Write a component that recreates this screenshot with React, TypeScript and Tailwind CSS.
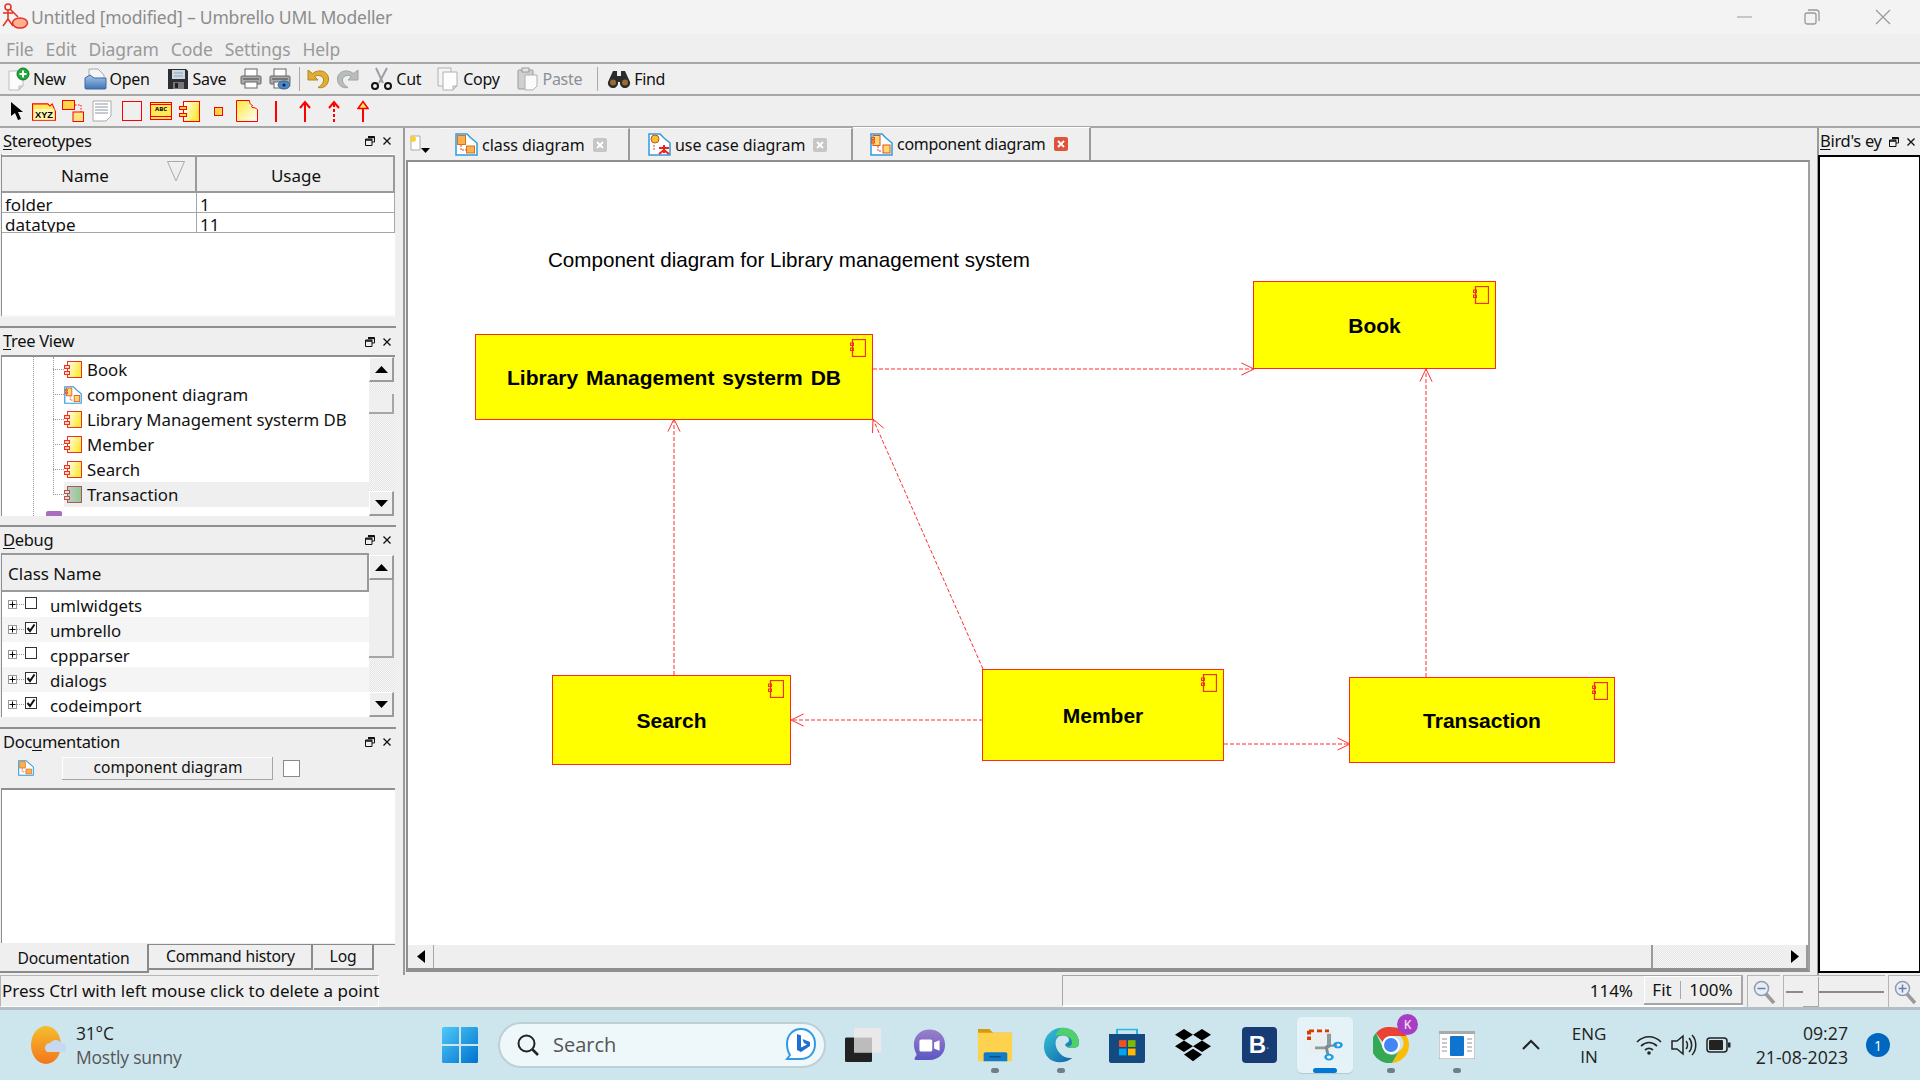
import type { ReactNode } from "react";
import clsx from "clsx";

const UI_FONT = "font-['Noto_Sans','Open_Sans',sans-serif]";

function Gradients() {
  return (
    <svg className="absolute h-0 w-0">
      <defs>
        <linearGradient id="yel" x1="0" y1="0" x2="1" y2="0.4">
          <stop offset="0" stopColor="#fff" />
          <stop offset="1" stopColor="#ffe93a" />
        </linearGradient>
        <linearGradient id="yel2" x1="0" y1="0" x2="1" y2="1">
          <stop offset="0" stopColor="#ffe93a" />
          <stop offset="1" stopColor="#fff" />
        </linearGradient>
        <linearGradient id="sel" x1="0" y1="0" x2="1" y2="0">
          <stop offset="0" stopColor="#c9c9c9" />
          <stop offset="1" stopColor="#8fc98f" />
        </linearGradient>
        <linearGradient id="blue" x1="0" y1="0" x2="0" y2="1">
          <stop offset="0" stopColor="#a9c8ea" />
          <stop offset="1" stopColor="#3e74b5" />
        </linearGradient>
        <linearGradient id="win" x1="0" y1="0" x2="1" y2="1">
          <stop offset="0" stopColor="#4fc8f8" />
          <stop offset="1" stopColor="#0072cf" />
        </linearGradient>
        <linearGradient id="sun" x1="0" y1="0" x2="0" y2="1">
          <stop offset="0" stopColor="#f4bf2d" />
          <stop offset="1" stopColor="#f4761b" />
        </linearGradient>
        <linearGradient id="edge" x1="0" y1="0" x2="1" y2="1">
          <stop offset="0" stopColor="#37c6d8" />
          <stop offset="1" stopColor="#0c59a4" />
        </linearGradient>
        <linearGradient id="chat" x1="0" y1="0" x2="0" y2="1">
          <stop offset="0" stopColor="#9b7fc7" />
          <stop offset="1" stopColor="#5b57c4" />
        </linearGradient>
      </defs>
    </svg>
  );
}

function CompIcon({ selected }: { selected?: boolean }) {
  const stroke = selected ? "#a65a5a" : "#f03020";
  return (
    <svg width="18" height="18" viewBox="0 0 18 18" className="shrink-0">
      <rect x="3.5" y="0.5" width="14" height="16" fill={selected ? "url(#sel)" : "url(#yel)"} stroke={stroke} />
      <rect x="0.5" y="4.5" width="5" height="3" fill="#ffd0c0" stroke={stroke} />
      <rect x="0.5" y="10.5" width="5" height="3" fill="#ffd0c0" stroke={stroke} />
    </svg>
  );
}

function DiagIcon({ kind, size = 23 }: { kind: "class" | "use" | "comp"; size?: number }) {
  return (
    <svg width={size} height={size} viewBox="0 0 23 23" className="shrink-0">
      <path d="M1 1h11l4 4 6 5v12H1z" fill="#fff" stroke="#2f9be0" strokeWidth="1.5" />
      {kind === "class" && (
        <>
          <rect x="2.5" y="2.5" width="8" height="9" fill="#f8b050" stroke="#d87020" />
          <rect x="11.5" y="13" width="8" height="7" fill="#f8b050" stroke="#d87020" />
          <path d="M6 12v5h5" fill="none" stroke="#e04020" strokeDasharray="2 1" />
        </>
      )}
      {kind === "use" && (
        <>
          <circle cx="7" cy="6" r="4" fill="#f5c030" stroke="#c8502a" />
          <path d="M6 12v6" stroke="#e04020" strokeDasharray="2 1" />
          <path d="M16 12v8M11 15h10M16 17l-5 4M16 17l5 4" stroke="#ee2020" strokeWidth="2" />
        </>
      )}
      {kind === "comp" && (
        <>
          <rect x="3" y="2.5" width="7" height="10" fill="#ffd870" stroke="#e05020" />
          <rect x="1.5" y="4.5" width="3" height="2" fill="#f8b050" stroke="#e05020" />
          <rect x="1.5" y="8" width="3" height="2" fill="#f8b050" stroke="#e05020" />
          <rect x="13" y="12" width="7" height="8" fill="#ffd870" stroke="#e05020" />
          <path d="M8 13v5h4" fill="none" stroke="#e04020" strokeDasharray="2 1" />
        </>
      )}
    </svg>
  );
}

function FloatClose() {
  return (
    <div className="ml-auto flex items-center gap-[7px] pr-[4px]">
      <svg width="10" height="10" viewBox="0 0 10 10">
        <path d="M3 .5h6.5V6H7M.5 3H7v6.5H.5z" fill="none" stroke="#111" strokeWidth="1" />
        <path d="M3 1.5h6.5M.5 4H7" stroke="#111" strokeWidth="1.4" />
      </svg>
      <svg width="10" height="10" viewBox="0 0 10 10">
        <path d="M1.5 1.5l7 7M8.5 1.5l-7 7" stroke="#111" strokeWidth="1.3" />
      </svg>
    </div>
  );
}

function DockTitle({ pre = "", mark, post, h }: { pre?: string; mark: string; post: string; h: string }) {
  return (
    <div className={clsx("flex items-center pl-[3px] text-[16.500px] tracking-[-0.3px] text-[#111]", h)}>
      <span>
        {pre}
        <span className="underline underline-offset-2">{mark}</span>
        {post}
      </span>
      <FloatClose />
    </div>
  );
}

function Sep() {
  return <div className="h-[2px] shrink-0 bg-[#8f8f8f]" />;
}

function ArrowBtn({ up, h = "h-[25px]" }: { up?: boolean; h?: string }) {
  return (
    <div className={clsx("flex w-[25px] shrink-0 items-center justify-center border-r-2 border-b-2 border-[#9a9a9a] border-t border-l border-t-white border-l-white bg-[#efefef]", h)}>
      <svg width="13" height="7" viewBox="0 0 13 7">
        <path d={up ? "M6.5 0L13 7H0z" : "M0 0h13L6.5 7z"} fill="#000" />
      </svg>
    </div>
  );
}

const CHECKER = "bg-[repeating-conic-gradient(#e4e4e4_0_25%,#f8f8f8_0_50%)] bg-[length:2px_2px]";

function ToolBtn({ icon, label, muted, className }: { icon: ReactNode; label: string; muted?: boolean; className?: string }) {
  return (
    <div className={clsx("flex items-center", className)}>
      {icon}
      <span className={clsx("ml-[3px] text-[16px] tracking-[-0.3px]", muted ? "text-[#8a8f96]" : "text-[#111]")}>{label}</span>
    </div>
  );
}

function PageIcon({ children }: { children?: ReactNode }) {
  return (
    <svg width="24" height="24" viewBox="0 0 24 24" className="shrink-0">
      <path d="M3 4h14v15l-4 4H3z" fill="#fbfbfb" stroke="#bdbdbd" />
      <path d="M17 19l-4 4v-4z" fill="#ddd" stroke="#bdbdbd" />
      {children}
    </svg>
  );
}

function PrinterIcon({ eye }: { eye?: boolean }) {
  return (
    <svg width="22" height="24" viewBox="0 0 22 24" className="shrink-0">
      <rect x="5" y="2" width="12" height="8" fill="#fff" stroke="#666" />
      <rect x="1" y="9" width="20" height="8" rx="1" fill="#aaa" stroke="#666" />
      <rect x="5" y="15" width="12" height="6" fill="#fff" stroke="#666" />
      <path d="M3 12h16" stroke="#444" />
      {eye && <ellipse cx="15" cy="18" rx="6" ry="4" fill="#4b88c8" stroke="#37618f" />}
      {eye && <circle cx="15" cy="18" r="1.6" fill="#123" />}
    </svg>
  );
}

function UndoIcon({ redo }: { redo?: boolean }) {
  return (
    <svg width="24" height="22" viewBox="0 0 24 22" className={clsx("shrink-0", redo && "-scale-x-100")}>
      <path
        d="M2 2v10h10L8.500 8.500C12 6.500 16.500 7.500 17.500 11 18 14 16 17 12 19.500c6 1.500 11-3 10.500-9.500C21.500 3 13 .5 6.500 5.500z"
        fill={redo ? "#b9bdbd" : "#e0ae35"}
        stroke={redo ? "#a0a4a4" : "#b5851c"}
      />
    </svg>
  );
}

function Toolbar() {
  return (
    <div className="flex h-[32px] shrink-0 items-center border-b-2 border-[#a6a6a6] pl-[6px]">
      <ToolBtn
        label="New"
        icon={
          <PageIcon>
            <circle cx="17" cy="7" r="6" fill="#22a83a" stroke="#0c7c22" />
            <path d="M17 3.500v7M13.500 7h7" stroke="#fff" strokeWidth="2" />
          </PageIcon>
        }
      />
      <ToolBtn
        className="ml-[17px]"
        label="Open"
        icon={
          <svg width="24" height="24" viewBox="0 0 24 24" className="shrink-0">
            <path d="M6 2h9l6 6v6H6z" fill="#f5f5f5" stroke="#aaa" />
            <path d="M2 11l5-3 4 3h12v10a1 1 0 0 1-1 1H3a1 1 0 0 1-1-1z" fill="url(#blue)" stroke="#3a6aa6" />
          </svg>
        }
      />
      <ToolBtn
        className="ml-[16px]"
        label="Save"
        icon={
          <svg width="24" height="24" viewBox="0 0 24 24" className="shrink-0">
            <path d="M2 2h18l2 2v18H2z" fill="#2b2f33" />
            <rect x="6" y="3" width="13" height="9" fill="#cfd8e0" />
            <path d="M8 6h9M8 9h9" stroke="#8ba3b8" />
            <rect x="7" y="15" width="11" height="7" fill="#777" />
            <rect x="9" y="16" width="3" height="5" fill="#222" />
          </svg>
        }
      />
      <div className="ml-[14px]">
        <PrinterIcon />
      </div>
      <div className="ml-[7px]">
        <PrinterIcon eye />
      </div>
      <div className="ml-[8px] h-[24px] w-px bg-[#aaa]" />
      <div className="ml-[6px]">
        <UndoIcon />
      </div>
      <div className="ml-[6px]">
        <UndoIcon redo />
      </div>
      <ToolBtn
        className="ml-[9px]"
        label="Cut"
        icon={
          <svg width="24" height="24" viewBox="0 0 24 24" className="shrink-0">
            <path d="M7 1l7 15M18 1l-8 15" stroke="#9aa0a6" strokeWidth="2" fill="none" />
            <circle cx="6" cy="19" r="3" fill="none" stroke="#111" strokeWidth="2" />
            <circle cx="19" cy="19" r="3" fill="none" stroke="#111" strokeWidth="2" />
          </svg>
        }
      />
      <ToolBtn
        className="ml-[15px]"
        label="Copy"
        icon={
          <svg width="24" height="24" viewBox="0 0 24 24" className="shrink-0">
            <path d="M2 1h13v18H2z" fill="#f4f4f4" stroke="#b0b0b0" />
            <path d="M7 5h14v14l-4 4H7z" fill="#fdfdfd" stroke="#b0b0b0" />
            <path d="M21 19l-4 4v-4z" fill="#ddd" stroke="#b0b0b0" />
          </svg>
        }
      />
      <ToolBtn
        className="ml-[16px]"
        label="Paste"
        muted
        icon={
          <svg width="24" height="24" viewBox="0 0 24 24" className="shrink-0">
            <rect x="2" y="3" width="15" height="19" rx="1" fill="#d0d0d0" stroke="#9a9a9a" />
            <rect x="6" y="1" width="7" height="4" fill="#e4e4e4" stroke="#9a9a9a" />
            <path d="M9 8h12v11l-4 4H9z" fill="#fbfbfb" stroke="#b0b0b0" />
          </svg>
        }
      />
      <div className="ml-[15px] h-[24px] w-px bg-[#aaa]" />
      <ToolBtn
        className="ml-[9px]"
        label="Find"
        icon={
          <svg width="24" height="18" viewBox="0 0 24 18" className="shrink-0">
            <path d="M6 1h4v5h4V1h4l5 11a5 5 0 0 1-10 2v-2h-2v2a5 5 0 0 1-10-2z" fill="#2b2b2b" />
            <circle cx="6" cy="12.500" r="3" fill="#9b6a2f" />
            <circle cx="18" cy="12.500" r="3" fill="#9b6a2f" />
          </svg>
        }
      />
    </div>
  );
}

function Diagrambar() {
  const r = "#ff0000";
  return (
    <div className="flex h-[32px] shrink-0 items-center border-b-2 border-[#a6a6a6] pl-[10px]">
      <svg width="14" height="20" viewBox="0 0 14 20" className="shrink-0">
        <path d="M1 1v14l4-3 3 7 3-1-3-7h5z" fill="#000" />
      </svg>
      <svg width="24" height="20" viewBox="0 0 22 18" className="ml-[8px] shrink-0">
        <path d="M.5 2.500h14l2 2 2-2 3 7v8H.5z" fill="#ffe85a" stroke={r} />
        <rect x="1.500" y="7" width="19" height="10" fill="#fff6b0" />
        <text x="11" y="15" textAnchor="middle" fontSize="8.500" fontWeight="700" fontFamily="Liberation Sans">XYZ</text>
      </svg>
      <svg width="22" height="22" viewBox="0 0 22 22" className="ml-[6px] shrink-0">
        <rect x=".5" y=".5" width="12" height="9" fill="#ffd84a" stroke={r} />
        <rect x="11" y="12" width="10.500" height="9.500" fill="#ffe680" stroke={r} />
        <path d="M13 5h6v7" fill="none" stroke={r} strokeDasharray="1.500 1.500" />
      </svg>
      <svg width="20" height="22" viewBox="0 0 20 22" className="ml-[8px] shrink-0">
        <path d="M1 1h18v15l-5 5H1z" fill="#fff" stroke="#aaa" />
        <path d="M3 4h13M3 7h13M3 10h13M3 13h13" stroke="#8b96a5" />
      </svg>
      <div className="ml-[10px] h-[20px] w-[20px] border border-[#ff0000]" />
      <div className="ml-[8px] flex h-[18px] w-[22px] flex-col border border-[#ff0000] bg-[#ffe85a]">
        <div className="h-[2px] border-b border-[#ff0000]" />
        <div className="flex-1 text-center text-[6px] leading-[9px] font-bold">ABC</div>
        <div className="h-[3px] border-t border-[#ff0000]" />
      </div>
      <svg width="21" height="21" viewBox="0 0 21 21" className="ml-[7px] shrink-0">
        <rect x="4.500" y=".5" width="16" height="20" fill="url(#yel)" stroke={r} />
        <rect x=".5" y="5.500" width="7" height="3" fill="#ffd84a" stroke={r} />
        <rect x=".5" y="12.500" width="7" height="3" fill="#ffd84a" stroke={r} />
      </svg>
      <div className="ml-[14px] h-[9px] w-[9px] border border-[#ff0000] bg-[#ffd84a]" />
      <svg width="22" height="22" viewBox="0 0 22 22" className="ml-[13px] shrink-0">
        <path d="M.5.5h13c0 3 1 4 3 5-1 1-1 2 0 2 2 0 4 1 5 2v12H.5z" fill="url(#yel2)" stroke={r} />
      </svg>
      <div className="ml-[17px] h-[21px] w-[2px] bg-[#ff0000]" />
      <svg width="12" height="22" viewBox="0 0 12 22" className="ml-[22px] shrink-0">
        <path d="M6 22V2M1 8l5-6 5 6" fill="none" stroke={r} strokeWidth="2" />
      </svg>
      <svg width="12" height="22" viewBox="0 0 12 22" className="ml-[17px] shrink-0">
        <path d="M6 22V2" fill="none" stroke={r} strokeWidth="2" strokeDasharray="3 2" />
        <path d="M1 8l5-6 5 6" fill="none" stroke={r} strokeWidth="2" />
      </svg>
      <svg width="12" height="22" viewBox="0 0 12 22" className="ml-[17px] shrink-0">
        <path d="M6 22V8" fill="none" stroke={r} strokeWidth="2" />
        <path d="M6 1.500l5 7H1z" fill="#ffe85a" stroke={r} strokeWidth="1.500" />
      </svg>
    </div>
  );
}

function Stereotypes() {
  return (
    <div className="mx-[1px] flex h-[163px] shrink-0 flex-col border-l border-[#8f8f8f] border-b-2 border-b-[#f8f8f8] bg-white pt-[1px]">
      <div className="flex h-[38px] shrink-0 border-y-2 border-r-2 border-[#9a9a9a] bg-[#efefef] pt-[3px] text-[17px] text-[#111]">
        <div className="relative -mt-[3px] flex w-[195px] items-center justify-center border-r-2 border-[#9a9a9a] pt-[3px] pr-[27px]">
          Name
          <svg width="18" height="21" viewBox="0 0 18 21" className="absolute top-[4px] right-[10px]">
            <path d="M.5 .5h17L9 20z" fill="none" stroke="#aaa" />
          </svg>
        </div>
        <div className="flex flex-1 items-center justify-center pl-[2px]">Usage</div>
      </div>
      <div className="flex h-[20px] shrink-0 border-b border-r border-[#a6a6a6] text-[17px] leading-[24px] text-[#111]">
        <div className="w-[195px] border-r border-[#a6a6a6] pl-[3px]">folder</div>
        <div className="pl-[3px]">1</div>
      </div>
      {/* the last row is cut by its line, as in the picture */}
      <div className="flex h-[20px] shrink-0 overflow-hidden border-b border-r border-[#a6a6a6] text-[17px] leading-[24px] text-[#111]">
        <div className="w-[195px] border-r border-[#a6a6a6] pl-[3px]">datatype</div>
        <div className="pl-[3px]">11</div>
      </div>
    </div>
  );
}

const TREE_ITEMS = ["Book", "component diagram", "Library Management systerm DB", "Member", "Search", "Transaction"];

function TreeView() {
  return (
    <div className="relative mx-[1px] flex h-[161px] shrink-0 border-t-2 border-l border-[#8f8f8f] bg-white">
      <div className="relative min-w-0 flex-1 overflow-hidden">
        <div className="absolute top-0 bottom-0 left-[31px] border-l border-dotted border-[#999]" />
        <div className="absolute top-0 left-[51px] h-[138px] border-l border-dotted border-[#999]" />
        {TREE_ITEMS.map((item) => {
          const selected = item === "Transaction";
          return (
            <div key={item} className="flex h-[25px] items-center pl-[51px]">
              <div className="w-[11px] border-t border-dotted border-[#999]" />
              <div className={clsx("flex h-[25px] flex-1 items-center", selected && "bg-[#efefef]")}>
                {item === "component diagram" ? (
                  <DiagIcon kind="comp" size={18} />
                ) : (
                  <CompIcon selected={selected} />
                )}
                <span className="ml-[5px] text-[16.800px] whitespace-nowrap text-[#111]">{item}</span>
              </div>
            </div>
          );
        })}
        {/* next tree row, only its top shows above the frame */}
        <div className="mt-[4px] flex h-[5px] items-start overflow-hidden pl-[44px]">
          <div className="h-[10px] w-[16px] shrink-0 rounded-t-[2px] bg-[#a86cc0]" />
          <span className="ml-[5px] text-[16.800px] leading-[22px] whitespace-nowrap text-[#111]">Deployment View</span>
        </div>
      </div>
      <div className={clsx("flex w-[26px] shrink-0 flex-col", CHECKER)}>
        <ArrowBtn up />
        <div className="mt-[12px] h-[20px] w-[25px] border-r-2 border-b-2 border-[#a6a6a6] bg-[#efefef]" />
        <div className="flex-1" />
        <ArrowBtn />
      </div>
    </div>
  );
}

const DEBUG_ITEMS = [
  { name: "umlwidgets", on: false },
  { name: "umbrello", on: true },
  { name: "cppparser", on: false },
  { name: "dialogs", on: true },
  { name: "codeimport", on: true },
];

function DebugList() {
  return (
    <div className="mx-[1px] flex h-[164px] shrink-0 border-l border-[#8f8f8f] bg-white">
      <div className="min-w-0 flex-1">
        <div className="flex h-[39px] items-center border-y-2 border-r-2 border-[#9a9a9a] bg-[#efefef] pt-[3px] pl-[6px] text-[17px] text-[#111]">Class Name</div>
        {DEBUG_ITEMS.map((item, i) => (
          <div key={item.name} className={clsx("flex h-[25px] items-center pl-[6px]", i % 2 === 1 && "bg-[#f5f5f5]")}>
            <div className="flex h-[9px] w-[9px] items-center justify-center border border-[#999] bg-white text-[9px] leading-none text-black">
              <svg width="7" height="7" viewBox="0 0 7 7">
                <path d="M.5 3.500h6M3.500.5v6" stroke="#000" />
              </svg>
            </div>
            <div className="w-[7px] border-t border-dotted border-[#999]" />
            <div className="mb-[4px] ml-[1px] flex h-[12px] w-[12px] items-center justify-center border border-[#333] bg-white">
              {item.on && (
                <svg width="10" height="10" viewBox="0 0 10 10">
                  <path d="M1.500 5l2.500 3 4.500-6.500" fill="none" stroke="#111" strokeWidth="2" />
                </svg>
              )}
            </div>
            <span className="mt-[2px] ml-[13px] text-[16.800px] text-[#111]">{item.name}</span>
          </div>
        ))}
      </div>
      <div className={clsx("flex w-[26px] shrink-0 flex-col pt-[2px]", CHECKER)}>
        <ArrowBtn up />
        <div className="h-[78px] w-[25px] border-r-2 border-b-2 border-[#a6a6a6] bg-[#efefef]" />
        <div className="flex-1" />
        <ArrowBtn />
      </div>
    </div>
  );
}

function Documentation() {
  return (
    <>
      <div className="flex h-[26px] shrink-0 items-center">
        <div className="ml-[18px]">
          <DiagIcon kind="class" size={16} />
        </div>
        <div className="ml-[28px] flex h-[23px] w-[211px] items-center justify-center border-r border-b border-[#a6a6a6] bg-[#efefef] pl-[2px] text-[15.500px] text-[#111] shadow-[inset_1px_1px_0_#fff]">
          component diagram
        </div>
        <div className="ml-[10px] h-[17px] w-[17px] border border-[#8a8a8a] bg-white" />
      </div>
      <div className="mx-[1px] mt-[7px] h-[155px] shrink-0 border-t-2 border-l border-[#8f8f8f] bg-white" />
      <div className="flex h-[32px] shrink-0 items-start pt-[1px] text-[15.700px] tracking-[-0.2px] text-[#111]">
        <div className="flex h-[29px] w-[149px] items-center justify-center border-r-2 border-b-2 border-[#8a8a8a] pt-[3px]">Documentation</div>
        <div className="flex w-[246px] items-start border-t border-[#8a8a8a]">
          <div className="flex h-[25px] w-[164px] items-center justify-center border-r-2 border-b-2 border-[#8a8a8a] pt-[1px] pl-[1px]">Command history</div>
          <div className="ml-[1px] flex h-[25px] w-[60px] items-center justify-center border-r-2 border-b-2 border-[#8a8a8a] pt-[1px]">Log</div>
        </div>
      </div>
    </>
  );
}

const TABS = [
  { label: "class diagram", kind: "class" as const, w: "w-[191px]", pl: "pl-[16px]" },
  { label: "use case diagram", kind: "use" as const, w: "w-[223px]", pl: "pl-[18px]" },
  { label: "component diagram", kind: "comp" as const, w: "w-[238px]", pl: "pl-[17px]", active: true },
];

function TabBar() {
  return (
    <div className="flex h-[32px] shrink-0 items-stretch">
      <div className="flex w-[34px] shrink-0 items-center pl-[4px]">
        <svg width="22" height="20" viewBox="0 0 22 20">
          <path d="M2 2h9v14H2z" fill="#fff" stroke="#aaa" />
          <circle cx="4" cy="5" r="3" fill="#f8d040" />
          <path d="M12 14h9l-4.500 5z" fill="#000" />
        </svg>
      </div>
      {TABS.map((tab) => (
        <div
          key={tab.label}
          className={clsx(
            "flex items-center border-r-2 border-[#9a9a9a] bg-[#efefef]",
            tab.w,
            tab.pl,
            tab.active ? "-mb-[1px] -translate-y-[1px] border-t border-t-white" : "border-t border-t-[#f8f8f8]"
          )}
        >
          <DiagIcon kind={tab.kind} />
          <span className={clsx("ml-[4px] text-[16px] text-[#111]", tab.active ? "tracking-[-0.3px]" : "tracking-[-0.05px]")}>{tab.label}</span>
          <div
            className={clsx(
              "ml-[8px] flex h-[14px] w-[14px] items-center justify-center rounded-[2px]",
              tab.active ? "bg-[#e0543c]" : "bg-[#c6c6c6]"
            )}
          >
            <svg width="8" height="8" viewBox="0 0 8 8">
              <path d="M1 1l6 6M7 1l-6 6" stroke="#fff" strokeWidth="1.800" />
            </svg>
          </div>
        </div>
      ))}
    </div>
  );
}

function NodeGlyph() {
  return (
    <svg width="16" height="18" viewBox="0 0 16 18" className="absolute top-[4px] right-[6px]">
      <rect x="2.500" y=".5" width="13" height="17" fill="none" stroke="#f03020" strokeWidth="1.300" />
      <rect x=".5" y="4" width="3" height="2.500" fill="none" stroke="#f03020" />
      <rect x=".5" y="9" width="3" height="2.500" fill="none" stroke="#f03020" />
    </svg>
  );
}

const NODES = [
  { label: "Library Management systerm DB", pos: "left-[67px] top-[172px] w-[398px] h-[86px]" },
  { label: "Book", pos: "left-[845px] top-[119px] w-[243px] h-[88px]" },
  { label: "Search", pos: "left-[144px] top-[513px] w-[239px] h-[90px]" },
  { label: "Member", pos: "left-[574px] top-[507px] w-[242px] h-[92px]" },
  { label: "Transaction", pos: "left-[941px] top-[515px] w-[266px] h-[86px]" },
];

// page coordinates: the svg viewBox starts at the canvas corner
const LINKS: { x1: number; y1: number; x2: number; y2: number }[] = [
  { x1: 872, y1: 369, x2: 1253, y2: 369 },
  { x1: 1425, y1: 677, x2: 1425, y2: 369 },
  { x1: 673, y1: 675, x2: 673, y2: 419 },
  { x1: 982, y1: 669, x2: 872, y2: 419 },
  { x1: 982, y1: 720, x2: 790, y2: 720 },
  { x1: 1223, y1: 744, x2: 1349, y2: 744 },
];

function arrowHead(l: { x1: number; y1: number; x2: number; y2: number }) {
  const a = Math.atan2(l.y1 - l.y2, l.x1 - l.x2);
  const pt = (d: number) => `${l.x2 + 14 * Math.cos(a + d)} ${l.y2 + 14 * Math.sin(a + d)}`;
  return `M${pt(0.45)}L${l.x2} ${l.y2}L${pt(-0.45)}`;
}

function Canvas() {
  return (
    <div className="relative h-[783px] overflow-hidden bg-white font-['Liberation_Sans',sans-serif] text-black">
      <svg className="absolute inset-0 h-full w-full" viewBox="408 162 1398 783">
        {LINKS.map((l) => (
          <g key={`${l.x1}-${l.y1}`} fill="none" stroke="#ff2f2f" strokeWidth="1">
            <path d={`M${l.x1} ${l.y1}L${l.x2} ${l.y2}`} strokeDasharray="4 2" />
            <path d={arrowHead(l)} />
          </g>
        ))}
      </svg>
      <div className="absolute top-[83px] left-[140px] text-[20.600px] whitespace-nowrap">Component diagram for Library management system</div>
      {NODES.map((n) => (
        <div
          key={n.label}
          className={clsx(
            "absolute flex items-center justify-center border-[1.500px] border-[#ff2a1a] bg-[#ffff00] pt-[2px] text-[21px] font-bold [word-spacing:2px]",
            n.pos
          )}
        >
          {n.label}
          <NodeGlyph />
        </div>
      ))}
    </div>
  );
}

function HScroll() {
  return (
    <div className="flex h-[25px] shrink-0 border-b-2 border-[#8f8f8f]">
      <div className="flex w-[26px] items-center justify-center border-r border-[#a6a6a6] bg-[#efefef]">
        <svg width="8" height="13" viewBox="0 0 8 13">
          <path d="M8 0v13L0 6.500z" fill="#000" />
        </svg>
      </div>
      <div className="w-[1219px] border-r-2 border-[#9a9a9a] bg-[#efefef]" />
      <div className={clsx("flex-1", CHECKER)} />
      <div className="flex w-[25px] items-center justify-center border-r-2 border-[#9a9a9a] bg-[#efefef]">
        <svg width="8" height="13" viewBox="0 0 8 13">
          <path d="M0 0v13l8-6.500z" fill="#000" />
        </svg>
      </div>
    </div>
  );
}

function MagnifierIcon({ plus }: { plus?: boolean }) {
  return (
    <svg width="24" height="26" viewBox="0 0 24 26">
      <path d="M14 15l8 9" stroke="#9a9a9a" strokeWidth="3.500" />
      <circle cx="9.500" cy="9.500" r="7" fill="#e8eef6" stroke="#8d9cb4" strokeWidth="1.500" />
      <path d="M5.500 9.500h8" stroke="#6a7fa3" strokeWidth="1.500" />
      {plus && <path d="M9.500 5.500v8" stroke="#6a7fa3" strokeWidth="1.500" />}
    </svg>
  );
}

function StatusBar() {
  return (
    <div className="flex h-[32px] shrink-0 items-stretch text-[17px] text-[#111]">
      <div className="flex w-[379px] items-center border border-[#b5b5b5] border-r-white border-b-white pl-[1px] whitespace-nowrap">
        Press Ctrl with left mouse click to delete a point
      </div>
      <div className="w-[683px]" />
      <div className="flex w-[681px] border-t border-l border-[#a6a6a6] border-b-2 border-b-white">
        <span className="ml-auto self-center pr-[11px]">114%</span>
        <div className="flex w-[99px] items-center border-r-2 border-b-2 border-[#a6a6a6] bg-[#efefef] shadow-[inset_1px_1px_0_#fff]">
          <span className="w-[36px] text-center">Fit</span>
          <div className="h-[18px] w-px bg-[#aaa]" />
          <span className="flex-1 text-center">100%</span>
        </div>
      </div>
      <div className="ml-[4px] flex w-[33px] items-center justify-center border-t border-l border-[#b5b5b5]">
        <MagnifierIcon />
      </div>
      <div className="ml-[3px] flex w-[102px] items-center border-t border-l border-[#b5b5b5] pl-[2px]">
        <div className="relative h-[2px] w-[98px] bg-[#8a8a8a]">
          <div className="absolute -top-[14px] left-[17px] h-[30px] w-[16px] border-r border-b border-[#a6a6a6] bg-[#efefef]" />
        </div>
      </div>
      <div className="ml-[3px] flex flex-1 items-center justify-center border-t border-l border-[#b5b5b5]">
        <MagnifierIcon plus />
      </div>
    </div>
  );
}

function TaskIcon({ children, dot, active }: { children: ReactNode; dot?: boolean; active?: boolean }) {
  return (
    <div className={clsx("relative flex h-[56px] w-[56px] items-center justify-center rounded-[5px]", active && "bg-[#e5f2f7] shadow-[0_1px_1px_#b5c8cf]")}>
      {children}
      {dot && <div className="absolute bottom-[0px] left-[24px] h-[5px] w-[8px] rounded-full bg-[#6f7f87]" />}
      {active && <div className="absolute bottom-[0px] left-[16px] h-[5px] w-[24px] rounded-full bg-[#0078d4]" />}
    </div>
  );
}

function Taskbar() {
  return (
    <div className={clsx("flex h-[73px] shrink-0 items-center border-t-[3px] border-[#b2bfc4] bg-[#cde6ee] text-[#1c1c1c]", "font-['Open_Sans',sans-serif]")}>
      <svg width="36" height="40" viewBox="0 0 36 40" className="ml-[30px] shrink-0">
        <ellipse cx="16" cy="20" rx="15" ry="19" fill="url(#sun)" />
        <path d="M17 27a5 5 0 0 1 3-9 7 7 0 0 1 12 1 4 4 0 0 1 2 8z" fill="#c6d8f2" />
      </svg>
      <div className="ml-[10px] flex w-[100px] flex-col text-[17.500px] leading-[24px] tracking-[-0.2px]">
        <span>31°C</span>
        <span className="whitespace-nowrap text-[#555]">Mostly sunny</span>
      </div>
      <svg width="36" height="36" viewBox="0 0 36 36" className="ml-[266px] shrink-0">
        <path d="M0 1.500A1.500 1.500 0 0 1 1.500 0H17v17H0zM19 0h15.500A1.500 1.500 0 0 1 36 1.500V17H19zM0 19h17v17H1.500A1.500 1.500 0 0 1 0 34.500zM19 19h17v15.500a1.500 1.500 0 0 1-1.500 1.500H19z" fill="url(#win)" />
      </svg>
      <div className="ml-[20px] flex h-[46px] w-[328px] shrink-0 items-center rounded-full border-2 border-[#bcd0d6] bg-[#eef7fa] pl-[16px]">
        <svg width="24" height="24" viewBox="0 0 24 24">
          <circle cx="10.500" cy="10.500" r="8" fill="none" stroke="#222" strokeWidth="2" />
          <path d="M16.500 16.500L22 22" stroke="#222" strokeWidth="2.500" />
        </svg>
        <span className="ml-[13px] text-[20px] text-[#555]">Search</span>
        <svg width="32" height="38" viewBox="0 0 32 38" className="mr-[7px] ml-auto">
          <path d="M16 3c8 0 14 6 14 15s-6 15-14 15H2l3-4C3 26 2 22 2 18 2 9 8 3 16 3z" fill="#fff" stroke="#2f9be8" strokeWidth="2" />
          <path d="M12 8l4 1.500v12l6-3-3-1.500-1.500-4 7.500 3v4l-9 6-4-2z" fill="#1f6fd0" />
        </svg>
      </div>
      <div className="ml-[9px] flex items-center gap-[10px]">
        <TaskIcon>
          <svg width="36" height="34" viewBox="0 0 36 46" preserveAspectRatio="none">
            <rect x="0" y="13" width="27" height="33" rx="1.500" fill="#222" />
            <rect x="9" y="0" width="27" height="33" rx="1" fill="#e9e9e9" />
            <rect x="9" y="13" width="18" height="20" fill="#bcbcbc" />
          </svg>
        </TaskIcon>
        <TaskIcon>
          <svg width="33" height="35" viewBox="0 0 36 46" preserveAspectRatio="none">
            <path d="M18 2c10 0 17 8 17 20s-7 20-17 20H4c-2 0-3-1-2-3l2-4C2 30 1 26 1 22 1 10 8 2 18 2z" fill="url(#chat)" />
            <rect x="7" y="15" width="14" height="16" rx="2" fill="#fff" />
            <path d="M23 19l6-3v14l-6-3z" fill="#fff" />
          </svg>
        </TaskIcon>
        <TaskIcon dot>
          <svg width="36" height="33" viewBox="0 0 38 44" preserveAspectRatio="none">
            <path d="M1 0h12l4 5h20v10H1z" fill="#d89a0a" />
            <rect x="1" y="5" width="36" height="38" fill="#ffd24e" />
            <path d="M7 43V33a2 2 0 0 1 2-2h21a2 2 0 0 1 2 2v10z" fill="#0f7cc9" />
            <path d="M13 37h12" stroke="#0a4f8a" strokeWidth="2" />
          </svg>
        </TaskIcon>
        <TaskIcon dot>
          <svg width="37" height="36" viewBox="0 0 40 48" preserveAspectRatio="none">
            <path d="M1 26C1 11 10 1 21 1c11 0 18 9 18 21 0 4-3 6-8 6-4 0-7-2-7-4 0-3 5-3 4-8-1-4-5-6-10-4C12 15 12 28 19 36c3 4 8 6 13 5-4 4-9 6-14 6C8 47 1 38 1 26z" fill="url(#edge)" />
            <path d="M21 1c11 0 18 9 18 21 0 4-3 6-8 6-3 0-5-1-6-2 6 1 7-4 6-8-2-7-11-9-18-6C16 5 18 1 21 1z" fill="#4fd06a" />
          </svg>
        </TaskIcon>
        <TaskIcon>
          <svg width="36" height="35" viewBox="0 0 36 46" preserveAspectRatio="none">
            <path d="M8 8V2h20v6" fill="none" stroke="#29b6e8" strokeWidth="2" />
            <path d="M0 8h36v35a3 3 0 0 1-3 3H3a3 3 0 0 1-3-3z" fill="#154a80" />
            <rect x="10" y="16" width="7.500" height="9" fill="#f25022" />
            <rect x="19" y="16" width="7.500" height="9" fill="#7fba00" />
            <rect x="10" y="27" width="7.500" height="9" fill="#00a4ef" />
            <rect x="19" y="27" width="7.500" height="9" fill="#ffb900" />
          </svg>
        </TaskIcon>
        <TaskIcon>
          <svg width="36" height="33" viewBox="0 0 36 40" preserveAspectRatio="none">
            <path d="M9 0l9 7-9 7-9-7zM27 0l9 7-9 7-9-7zM9 14l9 7-9 7-9-7zM27 14l9 7-9 7-9-7zM18 24l9 7-9 8-9-8z" fill="#000" />
          </svg>
        </TaskIcon>
        <TaskIcon>
          <div className="flex h-[36px] w-[35px] items-center justify-center rounded-[4px] bg-[#173b73] font-['Liberation_Sans',sans-serif] text-[24px] font-bold text-white">
            B<span className="text-[11px] text-[#36a3e8]">.</span>
          </div>
        </TaskIcon>
        <TaskIcon active>
          <svg width="36" height="34" viewBox="0 0 36 48" preserveAspectRatio="none">
            <rect x="2" y="4" width="24" height="32" fill="#e9eef0" />
            <path d="M2 4h20" stroke="#d83b01" strokeWidth="4" strokeDasharray="5 3" />
            <path d="M2 4v16" stroke="#d83b01" strokeWidth="4" strokeDasharray="5 3" />
            <path d="M8 28h10a4 4 0 0 0 4-4V8" fill="none" stroke="#8a9aa3" strokeWidth="4" />
            <path d="M19 26l11-2M19 26l2 12" stroke="#7c8a92" strokeWidth="3" />
            <circle cx="31" cy="24" r="3.500" fill="none" stroke="#1d9be0" strokeWidth="2.500" />
            <circle cx="22" cy="41" r="3.500" fill="none" stroke="#1d9be0" strokeWidth="2.500" />
          </svg>
        </TaskIcon>
        <TaskIcon dot>
          <svg width="36" height="36" viewBox="0 0 36 36">
            <path d="M18 0a18 18 0 0 1 15.600 9H18a9 9 0 0 0-8.500 6L3 6A18 18 0 0 1 18 0z" fill="#ea4335" />
            <path d="M33.600 9A18 18 0 0 1 19 36l7-12a9 9 0 0 0 1-15z" fill="#fbbc05" />
            <path d="M3 6a18 18 0 0 0 16 30l7-12a9 9 0 0 1-16-3z" fill="#34a853" />
            <circle cx="18" cy="18" r="9" fill="#fff" />
            <circle cx="18" cy="18" r="7" fill="#4285f4" />
          </svg>
          <div className="absolute top-[-3px] right-[1px] flex h-[21px] w-[21px] items-center justify-center rounded-full bg-[#a83fc2] text-[12px] font-semibold text-[#f2d8f8]">K</div>
        </TaskIcon>
        <TaskIcon dot>
          <svg width="36" height="28" viewBox="0 0 36 28">
            <rect width="36" height="28" fill="#fff" stroke="#999" />
            <rect width="36" height="3" fill="#aaa" />
            <rect x="11" y="5" width="14" height="20" rx="1" fill="#0f74cf" />
            <path d="M3 8h5M3 12h5M3 16h5M3 20h5M28 8h5M28 12h5M28 16h5M28 20h5" stroke="#c9c9c9" strokeWidth="2" />
          </svg>
        </TaskIcon>
      </div>
      <svg width="18" height="12" viewBox="0 0 18 12" className="ml-[37px] shrink-0">
        <path d="M1 10l8-8 8 8" fill="none" stroke="#222" strokeWidth="2" />
      </svg>
      <div className="ml-[25px] flex w-[48px] flex-col items-center text-[17px] leading-[23px] text-[#222]">
        <span>ENG</span>
        <span>IN</span>
      </div>
      <svg width="26" height="20" viewBox="0 0 26 20" className="ml-[23px] shrink-0">
        <path d="M1 7c7-7 17-7 24 0M5 11c5-4.500 11-4.500 16 0M9 15c2.500-2 5.500-2 8 0" fill="none" stroke="#222" strokeWidth="1.700" />
        <circle cx="13" cy="18" r="1.800" fill="#222" />
      </svg>
      <svg width="26" height="24" viewBox="0 0 26 24" className="ml-[9px] shrink-0">
        <path d="M1 8h5l6-5v18l-6-5H1z" fill="none" stroke="#222" strokeWidth="1.500" />
        <path d="M15 8c2 2 2 6 0 8M18 5c3.500 3.500 3.500 10.500 0 14M21 2c5 5 5 15 0 20" fill="none" stroke="#222" strokeWidth="1.500" />
      </svg>
      <svg width="25" height="16" viewBox="0 0 25 16" className="ml-[9px] shrink-0">
        <rect x="1" y="1" width="20" height="14" rx="3" fill="none" stroke="#222" strokeWidth="1.500" />
        <rect x="3" y="3" width="14" height="10" rx="1" fill="#222" />
        <rect x="22" y="5.500" width="2.500" height="5" fill="#222" />
      </svg>
      <div className="ml-[23px] flex w-[94px] shrink-0 flex-col items-end text-[17.700px] leading-[24px] text-[#222]">
        <span className="whitespace-nowrap">09:27</span>
        <span className="whitespace-nowrap">21-08-2023</span>
      </div>
      <div className="ml-[18px] flex h-[24px] w-[24px] shrink-0 items-center justify-center rounded-full bg-[#0067c0] text-[14px] text-white">1</div>
    </div>
  );
}

export default function App() {
  return (
    <div className={clsx("flex h-[1080px] w-[1920px] flex-col overflow-hidden bg-[#efefef]", UI_FONT)}>
      <Gradients />
      <div className="flex h-[34px] shrink-0 items-center bg-[#f3f3f3] pl-[2px] text-[17.500px] tracking-[-0.2px] text-[#8c8c8c]">
        <svg width="28" height="28" viewBox="0 0 28 28" className="shrink-0">
          <circle cx="6" cy="4" r="3" fill="none" stroke="#e53020" strokeWidth="1.500" />
          <path d="M6 7v9M1 10h10M6 16l-5 7M6 16l5 7M8 6l8 8" stroke="#e53020" strokeWidth="1.500" fill="none" />
          <ellipse cx="18" cy="20" rx="7.500" ry="5" fill="#ffb090" stroke="#e53020" strokeWidth="1.500" />
        </svg>
        <span className="ml-[1px]">Untitled [modified] – Umbrello UML Modeller</span>
        <svg width="18" height="18" viewBox="0 0 18 18" className="ml-auto">
          <path d="M2 9h15" stroke="#999" />
        </svg>
        <svg width="18" height="18" viewBox="0 0 18 18" className="ml-[50px]">
          <rect x="2" y="5" width="11" height="11" rx="2" fill="none" stroke="#999" strokeWidth="1.300" />
          <path d="M5 2h8a3 3 0 0 1 3 3v8" fill="none" stroke="#999" strokeWidth="1.300" />
        </svg>
        <svg width="18" height="18" viewBox="0 0 18 18" className="mr-[28px] ml-[53px]">
          <path d="M2 2l14 14M16 2L2 16" stroke="#999" strokeWidth="1.200" />
        </svg>
      </div>
      <div className="flex h-[30px] shrink-0 items-center gap-[12px] border-b-2 border-[#a6a6a6] pt-[2px] pl-[6px] text-[17.500px] tracking-[-0.1px] text-[#999]">
        {["File", "Edit", "Diagram", "Code", "Settings", "Help"].map((m) => (
          <span key={m}>{m}</span>
        ))}
      </div>
      <Toolbar />
      <Diagrambar />
      <div className="flex h-[847px] shrink-0">
        <div className="flex w-[396px] shrink-0 flex-col">
          <DockTitle mark="S" post="tereotypes" h="h-[26px] shrink-0" />
          <Stereotypes />
          <div className="h-[9px] shrink-0" />
          <Sep />
          <DockTitle mark="T" post="ree View" h="h-[27px] shrink-0" />
          <TreeView />
          <div className="h-[9px] shrink-0" />
          <Sep />
          <DockTitle mark="D" post="ebug" h="h-[26px] shrink-0" />
          <DebugList />
          <div className="h-[10px] shrink-0" />
          <Sep />
          <DockTitle pre="Doc" mark="u" post="mentation" h="h-[26px] shrink-0" />
          <Documentation />
        </div>
        <div className="ml-[7px] flex w-[1414px] shrink-0 flex-col border-l-2 border-[#9a9a9a]">
          <TabBar />
          <div className="ml-[1px] flex w-[1404px] flex-col border-2 border-[#8f8f8f] border-r-[#a0a0a0]">
            <Canvas />
            <HScroll />
          </div>
        </div>
        <div className="flex min-w-0 flex-1 flex-col border-l-2 border-[#9a9a9a]">
          <div className="flex h-[27px] shrink-0 items-center overflow-hidden pl-[1px] text-[16.500px] tracking-[-0.3px] text-[#111]">
            <span className="whitespace-nowrap">
              <span className="underline underline-offset-2">B</span>ird's ey
            </span>
            <FloatClose />
          </div>
          <div className="-ml-[1px] h-[818px] border-2 border-r border-black bg-white" />
        </div>
      </div>
      <StatusBar />
      <Taskbar />
    </div>
  );
}
